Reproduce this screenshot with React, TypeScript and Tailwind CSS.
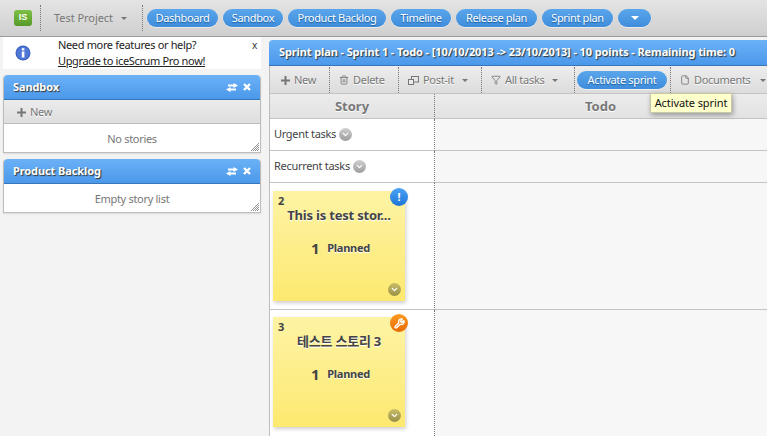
import React from "react";
import { Trash2, Filter, File, ChevronDown, Wrench } from "lucide-react";

const font = { fontFamily: '"Noto Sans","Noto Sans CJK KR",sans-serif' };

function Caret({ className = "border-t-[#777]" }: { className?: string }) {
  return <span className={`inline-block w-0 h-0 border-x-[3px] border-x-transparent border-t-[3px] ${className}`} />;
}

function Pill({ children, className = "" }: { children: React.ReactNode; className?: string }) {
  return (
    <div className={`h-[18px] shrink-0 rounded-full bg-gradient-to-b from-[#5aa6ec] to-[#3f8ddb] shadow-[0_1px_0_rgba(255,255,255,0.5)] text-white text-[11px] tracking-[-0.35px] flex items-center justify-center [text-shadow:0_1px_1px_#1c5a99] ${className}`}>
      {children}
    </div>
  );
}

function Dots({ className = "" }: { className?: string }) {
  return <div className={`shrink-0 border-l border-dotted border-[#777] ${className}`} />;
}

function PlusIcon() {
  return (
    <svg width="9" height="9" viewBox="0 0 9 9" className="shrink-0">
      <path d="M3.5 0h2v3.5H9v2H5.5V9h-2V5.5H0v-2h3.5z" fill="#777" />
    </svg>
  );
}

function PanelHead({ title }: { title: string }) {
  return (
    <div className="h-[25px] rounded-t-[4px] bg-gradient-to-b from-[#6bb1f7] to-[#4b98ea] border-b border-[#3a77b8] flex items-center pl-[9px] pr-[9px]">
      <span className="text-white text-[11px] font-bold tracking-[-0.1px] flex-1 [text-shadow:1px_1px_1px_#333]">{title}</span>
      <svg width="12" height="9" viewBox="0 0 12 9" className="mr-[5px]">
        <path d="M7.5 0L12 2.5L7.5 5V3.5H2V1.5H7.5zM4.5 4L0 6.5L4.5 9V7.5H10V5.5H4.5z" fill="#fff" />
      </svg>
      <svg width="8" height="8" viewBox="0 0 8 8">
        <path d="M1 1L7 7M7 1L1 7" stroke="#fff" strokeWidth="2.4" />
      </svg>
    </div>
  );
}

function Grip() {
  return (
    <svg width="8" height="8" viewBox="0 0 8 8" className="absolute right-[1px] bottom-[1px]">
      <path d="M8 0L0 8M8 2L2 8M8 4L4 8M8 6L6 8" stroke="#777" strokeWidth="0.8" />
    </svg>
  );
}

function Tool({ children, className = "" }: { children: React.ReactNode; className?: string }) {
  return <div className={`shrink-0 flex items-center gap-[4px] text-[#777] text-[11px] [text-shadow:0_1px_0_#fff] ${className}`}>{children}</div>;
}

function SmallRound({ dark = false }: { dark?: boolean }) {
  return (
    <span className={`inline-flex w-[13px] h-[13px] rounded-full items-center justify-center ${dark ? "bg-gradient-to-b from-[#c8bd68] to-[#9a9148]" : "bg-gradient-to-b from-[#d0d0d0] to-[#9c9c9c]"}`}>
      <ChevronDown size={9} strokeWidth={3.5} className="text-white" />
    </span>
  );
}

function Sticky({ id, title, badge, className = "" }: { id: string; title: string; badge: React.ReactNode; className?: string }) {
  return (
    <div className={`relative w-[132px] h-[110px] bg-gradient-to-b from-[#fdf3a4] to-[#fde96f] shadow-[1px_2px_4px_rgba(0,0,0,0.2)] text-[#444] ${className}`}>
      <div className="absolute left-[5px] top-[3px] text-[11px] font-bold leading-[14px]">{id}</div>
      <div className="pt-[15px] text-center text-[13px] font-bold tracking-[-0.2px] leading-[18px] [text-shadow:0_1px_0_#fff]">{title}</div>
      <div className="mt-[14px] flex items-center justify-center gap-[8px] pl-[3px]">
        <span className="text-[15px] font-bold leading-[20px]">1</span>
        <span className="text-[11px] font-bold tracking-[-0.25px] leading-[20px] [text-shadow:0_1px_0_#fff]">Planned</span>
      </div>
      {badge}
      <span className="absolute right-[4px] bottom-[5px] flex"><SmallRound dark /></span>
    </div>
  );
}

export default function App() {
  const pills: [string, string][] = [
    ["Dashboard", "w-[71px]"],
    ["Sandbox", "w-[60px]"],
    ["Product Backlog", "w-[98px]"],
    ["Timeline", "w-[60px]"],
    ["Release plan", "w-[81px]"],
    ["Sprint plan", "w-[71px]"],
  ];
  const solidBottom = "border-b border-[#c4c4c4]";
  const storyCell = "bg-white border-b border-b-[#c4c4c4] border-r border-r-[#777] [border-right-style:dotted]";
  return (
    <div style={font} className="w-[767px] h-[436px] overflow-hidden bg-[#f3f3f3] flex flex-col relative tracking-[-0.3px]">
      <header className="h-[37px] shrink-0 bg-gradient-to-b from-[#e4e4e4] to-[#cfcfcf] border-b border-[#9a9a9a] flex items-center">
        <div className="ml-[14px] w-[18px] h-[16px] shrink-0 rounded-[3px] bg-gradient-to-b from-[#7cc043] to-[#579a2a] text-white text-[9px] font-bold tracking-normal [font-family:'Liberation_Sans',sans-serif] flex items-center justify-center">IS</div>
        <Dots className="ml-[8px] h-[26px]" />
        <span className="ml-[13px] w-[60px] shrink-0 text-[11px] tracking-[-0.05px] text-[#777] whitespace-nowrap">Test Project</span>
        <Caret className="ml-[7px] border-t-[#777]" />
        <Dots className="ml-[15px] h-[26px]" />
        <div className="ml-[4px] flex gap-[5px]">
          {pills.map(([t, w]) => <Pill key={t} className={w}>{t}</Pill>)}
          <Pill className="w-[33px]"><Caret className="border-t-white border-x-[4px] border-t-[4px]" /></Pill>
        </div>
      </header>

      <div className="flex flex-1 min-h-0">
        <aside className="w-[269px] shrink-0 pl-[3px] pr-[8px] flex flex-col">
          <div className="relative h-[32px] bg-white text-[11px] tracking-[-0.35px] text-[#222] leading-[16px] pl-[55px]">
            <svg width="16" height="16" viewBox="0 0 16 16" className="absolute left-[12px] top-[8px]">
              <circle cx="8" cy="8" r="7.5" fill="#3c62c4" />
              <circle cx="8" cy="8" r="6.3" fill="#5077d6" />
              <rect x="6.8" y="6.5" width="2.6" height="6" fill="#fff" />
              <rect x="6.8" y="3.2" width="2.6" height="2.2" fill="#fff" />
            </svg>
            <div>Need more features or help?</div>
            <div className="underline">Upgrade to iceScrum Pro now!</div>
            <span className="absolute right-[4px] top-0 text-[10px] text-[#333]">x</span>
          </div>
          <section className="relative mt-[6px] h-[78px] shrink-0 bg-white border border-[#bdbdbd] border-t-0 rounded-t-[4px] shadow-[0_1px_2px_rgba(0,0,0,0.1)]">
            <PanelHead title="Sandbox" />
            <div className="h-[24px] pt-[2px] bg-gradient-to-b from-[#ececec] to-[#dedede] border-b border-[#bdbdbd] pl-[13px] flex items-center">
              <Tool><PlusIcon />New</Tool>
            </div>
            <div className="text-center text-[11px] text-[#777] leading-[30px]">No stories</div>
            <Grip />
          </section>
          <section className="relative mt-[6px] h-[54px] shrink-0 bg-white border border-[#bdbdbd] border-t-0 rounded-t-[4px] shadow-[0_1px_2px_rgba(0,0,0,0.1)]">
            <PanelHead title="Product Backlog" />
            <div className="text-center text-[11px] text-[#777] leading-[30px]">Empty story list</div>
            <Grip />
          </section>
        </aside>

        <main className="flex-1 min-w-0 pt-[3px] flex flex-col">
          <div className="h-[26px] shrink-0 rounded-tl-[4px] bg-gradient-to-b from-[#6bb1f7] to-[#4b98ea] border-b border-[#3a77b8] pl-[10px] flex items-center text-white text-[11px] font-bold tracking-[-0.11px] whitespace-nowrap [text-shadow:1px_1px_1px_#333]">
            Sprint plan - Sprint 1 - Todo - [10/10/2013 -&gt; 23/10/2013] - 10 points - Remaining time: 0
          </div>
          <div className="h-[28px] pt-[1px] shrink-0 bg-gradient-to-b from-[#ededed] to-[#dcdcdc] border-b border-[#c4c4c4] flex items-center border-l border-l-[#bdbdbd] overflow-hidden">
            <Tool className="w-[59px] pl-[11px]"><PlusIcon />New</Tool>
            <Dots className="h-[26px]" />
            <Tool className="w-[68px] pl-[9px]"><Trash2 size={10} />Delete</Tool>
            <Dots className="h-[26px]" />
            <Tool className="w-[82px] pl-[9px]">
              <svg width="11" height="9" viewBox="0 0 11 9" fill="none" stroke="#777">
                <rect x="3.5" y="0.5" width="7" height="5.5" />
                <rect x="0.5" y="3.5" width="5" height="5" fill="#eaeaea" />
              </svg>
              Post-it<Caret className="ml-[4px]" />
            </Tool>
            <Dots className="h-[26px]" />
            <Tool className="w-[92px] pl-[9px]"><Filter size={10} />All tasks<Caret className="ml-[4px]" /></Tool>
            <Dots className="h-[26px]" />
            <Pill className="w-[90px] ml-[2px] mr-[3px]">Activate sprint</Pill>
            <Dots className="h-[26px]" />
            <Tool className="pl-[9px]"><File size={10} />Documents<Caret className="ml-[5px]" /></Tool>
          </div>
          <div className="flex-1 min-h-0 border-l border-[#bdbdbd] grid grid-cols-[165px_1fr] grid-rows-[25px_32px_32px_127px_1fr] bg-[#f7f7f7]">
            <div className="bg-gradient-to-b from-[#ececec] to-[#e2e2e2] border-b border-b-[#c4c4c4] border-r border-r-[#777] [border-right-style:dotted] text-center text-[13px] font-bold tracking-normal text-[#777] leading-[24px] [text-shadow:0_1px_0_#fff]">Story</div>
            <div className={`bg-gradient-to-b from-[#ececec] to-[#e2e2e2] ${solidBottom} text-center text-[13px] font-bold tracking-normal text-[#777] leading-[24px] pr-[1px] [text-shadow:0_1px_0_#fff]`}>Todo</div>

            <div className={`${storyCell} flex items-center pl-[4px] gap-[3px] text-[11px] text-[#444]`}>Urgent tasks <SmallRound /></div>
            <div className={solidBottom} />

            <div className={`${storyCell} flex items-center pl-[4px] gap-[3px] text-[11px] text-[#444]`}>Recurrent tasks <SmallRound /></div>
            <div className={solidBottom} />

            <div className={`${storyCell} pl-[3px] pt-[8px]`}>
              <Sticky id="2" title="This is test stor..." badge={
                <span className="absolute right-[-3px] top-[-3px] w-[18px] h-[18px] rounded-full bg-gradient-to-b from-[#4aa3f5] to-[#1c74d8] text-white text-[11px] font-bold flex items-center justify-center">!</span>
              } />
            </div>
            <div className={solidBottom} />

            <div className="bg-white border-r border-r-[#777] [border-right-style:dotted] pl-[3px] pt-[7px]">
              <Sticky id="3" title="테스트 스토리 3" badge={
                <span className="absolute right-[-3px] top-[-3px] w-[18px] h-[18px] rounded-full bg-gradient-to-b from-[#fb9a1f] to-[#e86a00] text-white flex items-center justify-center"><Wrench size={11} strokeWidth={3} /></span>
              } />
            </div>
            <div />
          </div>
        </main>
      </div>

      <div className="absolute left-[650px] top-[93px] w-[82px] h-[20px] text-center bg-[#ffffcc] border border-[#c8c8a8] shadow-[1px_2px_5px_rgba(0,0,0,0.35)] text-[11px] tracking-[-0.1px] text-[#111] leading-[18px] whitespace-nowrap">Activate sprint</div>
    </div>
  );
}
